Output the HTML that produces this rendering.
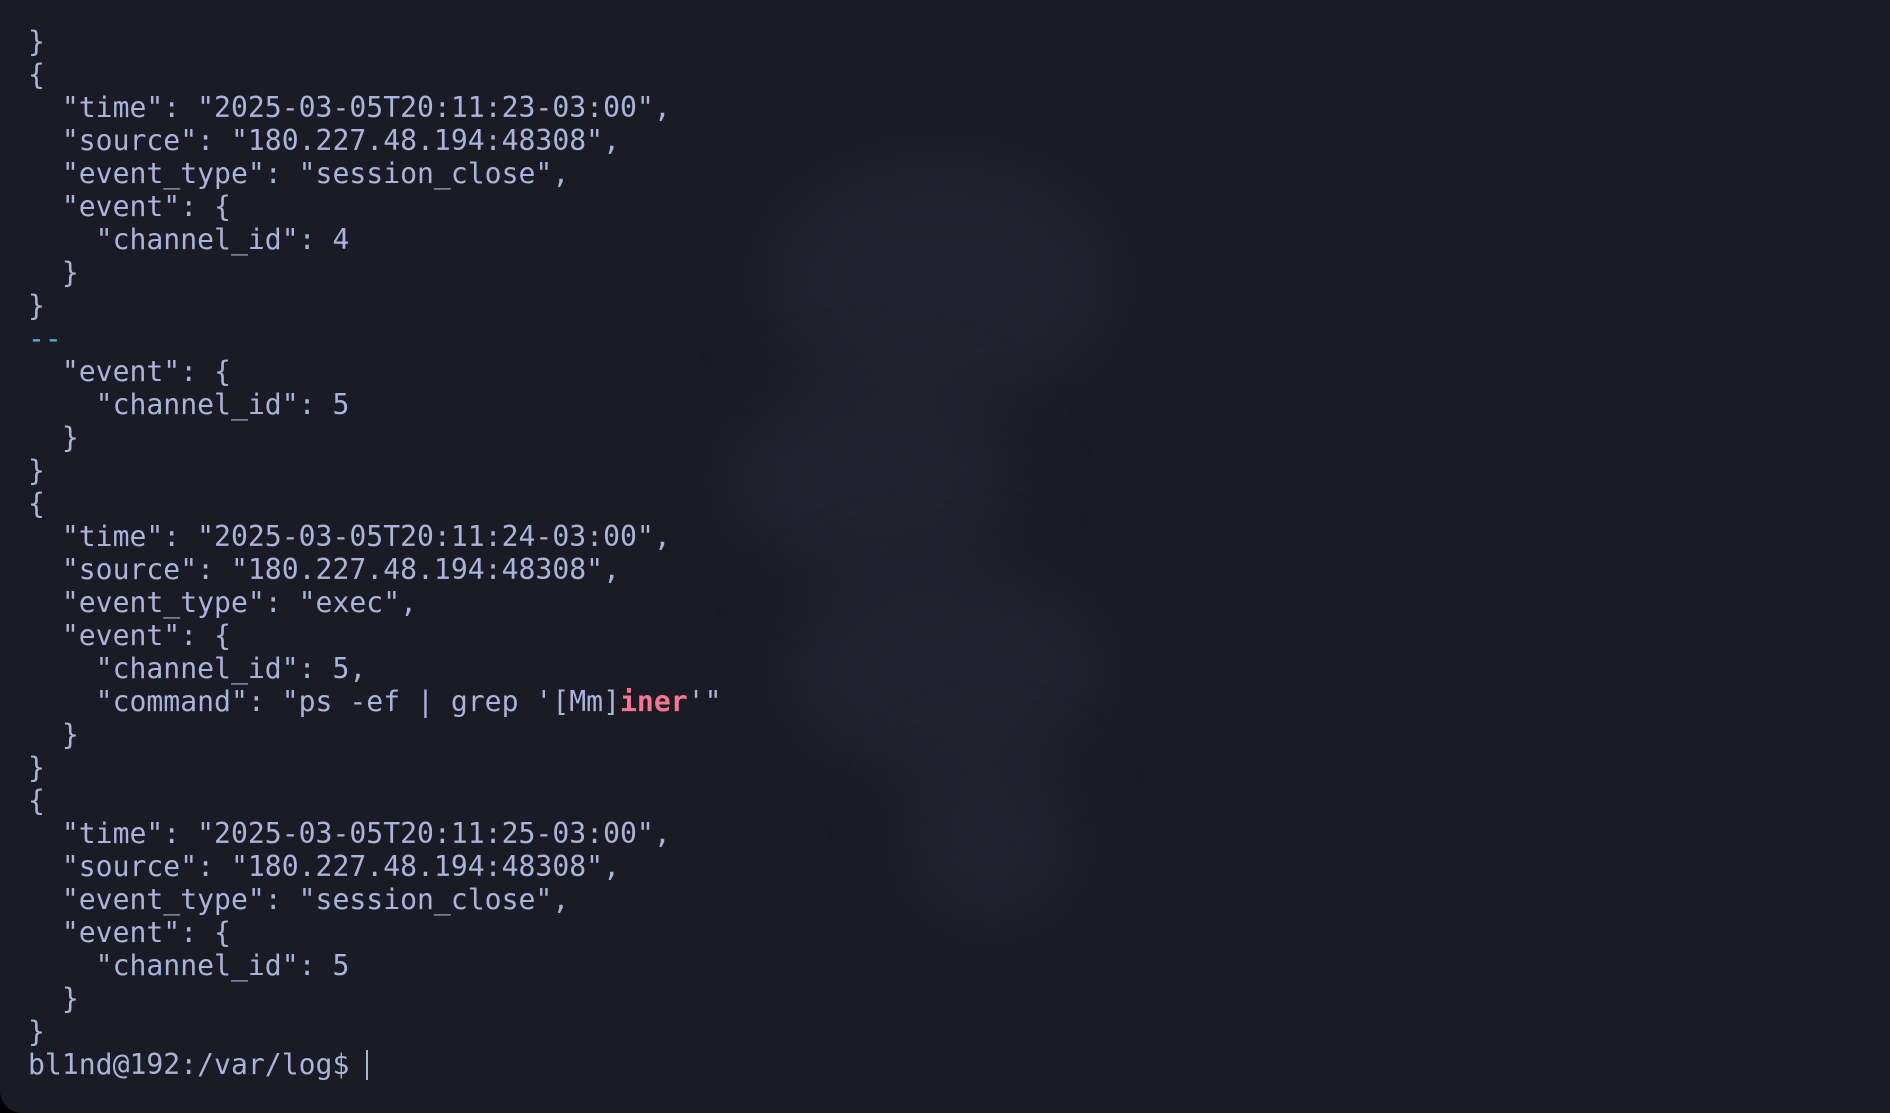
<!DOCTYPE html>
<html><head><style>
html,body{margin:0;padding:0;background:#000;}
.t{width:1890px;height:1113px;background:#1b1b26;border-radius:0 0 0 22px;position:relative;overflow:hidden;}
.d{position:absolute;border-radius:50%;background:#242530;filter:blur(35px);opacity:.75}
pre{position:absolute;left:28px;top:25px;margin:0;font-family:"DejaVu Sans Mono","Liberation Mono",monospace;font-size:28.1px;line-height:33px;color:#aab3db;}
.r{color:#f7768e;font-weight:bold}
.c{color:#4fb3e0}
.cur{display:inline-block;width:2px;height:30px;background:#aab3db;vertical-align:-6px}
</style></head><body><div class="t">
<div class="d" style="left:760px;top:150px;width:360px;height:260px"></div>
<div class="d" style="left:720px;top:380px;width:300px;height:200px"></div>
<div class="d" style="left:780px;top:560px;width:330px;height:220px"></div>
<div class="d" style="left:900px;top:750px;width:180px;height:180px"></div>
<pre>}
{
  "time": "2025-03-05T20:11:23-03:00",
  "source": "180.227.48.194:48308",
  "event_type": "session_close",
  "event": {
    "channel_id": 4
  }
}
<span class="c">--</span>
  "event": {
    "channel_id": 5
  }
}
{
  "time": "2025-03-05T20:11:24-03:00",
  "source": "180.227.48.194:48308",
  "event_type": "exec",
  "event": {
    "channel_id": 5,
    "command": "ps -ef | grep '[Mm]<span class="r">iner</span>'"
  }
}
{
  "time": "2025-03-05T20:11:25-03:00",
  "source": "180.227.48.194:48308",
  "event_type": "session_close",
  "event": {
    "channel_id": 5
  }
}
bl1nd@192:/var/log$ <span class="cur"></span></pre>
</div></body></html>
